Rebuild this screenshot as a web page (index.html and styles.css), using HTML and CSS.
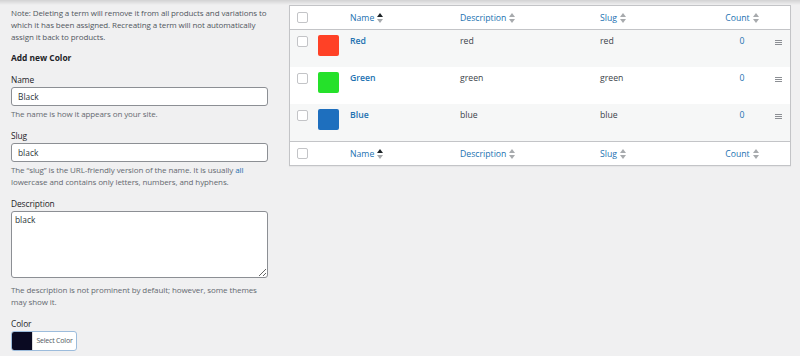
FILE: index.html
```html
<!DOCTYPE html>
<html>
    <head>
        <title>Color attributes</title>
        <link rel="stylesheet" href="styles.css">
    </head>
    <body>
        <div class="topShadow"></div>
        <div class="wrap">
            <div class="colLeft">
                <p class="note">Note: Deleting a term will remove it from all products and variations to which it has been assigned. Recreating a term will not automatically assign it back to products.</p>
                <h2 class="formTitle">Add new Color</h2>

                <div class="formField">
                    <label>Name</label>
                    <input type="text" value="Black">
                    <p class="help">The name is how it appears on your site.</p>
                </div>
                <div class="formField">
                    <label>Slug</label>
                    <input type="text" value="black">
                    <p class="help">The &ldquo;slug&rdquo; is the URL-friendly version of the name. It is usually <span class="blue">all</span> lowercase and contains only letters, numbers, and hyphens.</p>
                </div>
                <div class="formField">
                    <label>Description</label>
                    <textarea>black</textarea>
                    <p class="help">The description is not prominent by default; however, some themes may show it.</p>
                </div>
                <div class="formField">
                    <label>Color</label>
                    <div class="colorBtn"><span class="colorSwatch"></span><span class="colorText">Select Color</span></div>
                </div>
            </div>

            <div class="colRight">
                <div class="termTable">
                    <div class="row headRow">
                        <div class="cell"><span class="cb"></span></div>
                        <div class="cell"></div>
                        <div class="cell"><span class="sortLink">Name <svg class="sortIcon" width="6" height="10" viewBox="0 0 6 10"><path d="M3 0 L6 4 L0 4 Z" fill="#1d2327"/><path d="M0 6 L6 6 L3 10 Z" fill="#a7aaad"/></svg></span></div>
                        <div class="cell"><span class="sortLink">Description <svg class="sortIcon" width="6" height="10" viewBox="0 0 6 10"><path d="M3 0 L6 4 L0 4 Z" fill="#a7aaad"/><path d="M0 6 L6 6 L3 10 Z" fill="#a7aaad"/></svg></span></div>
                        <div class="cell"><span class="sortLink">Slug <svg class="sortIcon" width="6" height="10" viewBox="0 0 6 10"><path d="M3 0 L6 4 L0 4 Z" fill="#a7aaad"/><path d="M0 6 L6 6 L3 10 Z" fill="#a7aaad"/></svg></span></div>
                        <div class="cell countCell"><span class="sortLink">Count <svg class="sortIcon" width="6" height="10" viewBox="0 0 6 10"><path d="M3 0 L6 4 L0 4 Z" fill="#a7aaad"/><path d="M0 6 L6 6 L3 10 Z" fill="#a7aaad"/></svg></span></div>
                        <div class="cell"></div>
                    </div>

                    <div class="row termRow alt">
                        <div class="cell"><span class="cb"></span></div>
                        <div class="cell"><span class="swatch" style="background:#ff4126"></span></div>
                        <div class="cell"><a class="termName">Red</a></div>
                        <div class="cell">red</div>
                        <div class="cell">red</div>
                        <div class="cell countCell"><a class="count">0</a></div>
                        <div class="cell"><span class="handle"></span></div>
                    </div>
                    <div class="row termRow">
                        <div class="cell"><span class="cb"></span></div>
                        <div class="cell"><span class="swatch" style="background:#25e12a"></span></div>
                        <div class="cell"><a class="termName">Green</a></div>
                        <div class="cell">green</div>
                        <div class="cell">green</div>
                        <div class="cell countCell"><a class="count">0</a></div>
                        <div class="cell"><span class="handle"></span></div>
                    </div>
                    <div class="row termRow alt">
                        <div class="cell"><span class="cb"></span></div>
                        <div class="cell"><span class="swatch" style="background:#1e6fbe"></span></div>
                        <div class="cell"><a class="termName">Blue</a></div>
                        <div class="cell">blue</div>
                        <div class="cell">blue</div>
                        <div class="cell countCell"><a class="count">0</a></div>
                        <div class="cell"><span class="handle"></span></div>
                    </div>

                    <div class="row footRow">
                        <div class="cell"><span class="cb"></span></div>
                        <div class="cell"></div>
                        <div class="cell"><span class="sortLink">Name <svg class="sortIcon" width="6" height="10" viewBox="0 0 6 10"><path d="M3 0 L6 4 L0 4 Z" fill="#1d2327"/><path d="M0 6 L6 6 L3 10 Z" fill="#a7aaad"/></svg></span></div>
                        <div class="cell"><span class="sortLink">Description <svg class="sortIcon" width="6" height="10" viewBox="0 0 6 10"><path d="M3 0 L6 4 L0 4 Z" fill="#a7aaad"/><path d="M0 6 L6 6 L3 10 Z" fill="#a7aaad"/></svg></span></div>
                        <div class="cell"><span class="sortLink">Slug <svg class="sortIcon" width="6" height="10" viewBox="0 0 6 10"><path d="M3 0 L6 4 L0 4 Z" fill="#a7aaad"/><path d="M0 6 L6 6 L3 10 Z" fill="#a7aaad"/></svg></span></div>
                        <div class="cell countCell"><span class="sortLink">Count <svg class="sortIcon" width="6" height="10" viewBox="0 0 6 10"><path d="M3 0 L6 4 L0 4 Z" fill="#a7aaad"/><path d="M0 6 L6 6 L3 10 Z" fill="#a7aaad"/></svg></span></div>
                        <div class="cell"></div>
                    </div>
                </div>
            </div>
        </div>
    </body>
</html>
```

FILE: styles.css
```css
html,body{
    margin: 0;
    padding: 0;
    background-color: #f0f0f1;
    font-family: "Open Sans", "Noto Sans", sans-serif;
    font-size: 8.7px;
    line-height: 12px;
    color: #3c434a;
}
.topShadow{
    height: 5px;
    background: linear-gradient(#d2d2d3, #f0f0f1);
}
.wrap{
    display: flex;
    gap: 19px;
    padding: 0 9px 0 11px;
}

/* left form column */
.colLeft{
    width: 259px;
    flex: none;
    font-size: 8px;
    letter-spacing: -0.1px;
}
.note{
    margin: 2px 0 0 0;
    color: #50575e;
}
.formTitle{
    margin: 9px 0 0 0;
    font-size: 8.4px;
    line-height: 12px;
    font-weight: 700;
    letter-spacing: 0;
    color: #1d2327;
}
.formField{
    margin-top: 10px;
}
.formField label{
    display: block;
    font-size: 8.4px;
    letter-spacing: -0.1px;
    color: #1d2327;
    margin-bottom: 1px;
}
.formField input,.formField textarea{
    display: block;
    box-sizing: border-box;
    width: 257px;
    margin: 0;
    border: 1px solid #8c8f94;
    border-radius: 3px;
    background: white;
    font-family: inherit;
    font-size: 8.4px;
    color: #2c3338;
}
.formField input{
    height: 19px;
    padding: 0 6px;
}
.formField textarea{
    height: 67px;
    padding: 2px 3px;
    line-height: 12px;
    margin-bottom: 6px;
}
.help{
    margin: 2px 0 0 0;
    color: #646970;
}
.blue{
    color: #2271b1;
}
.colorBtn{
    display: flex;
    box-sizing: border-box;
    height: 20px;
    width: 66px;
    border: 1px solid #9cbcdc;
    border-radius: 3px;
    background: white;
    overflow: hidden;
}
.colorSwatch{
    width: 20px;
    flex: none;
    background: #0a0a22;
}
.colorText{
    flex: 1;
    font-size: 7px;
    letter-spacing: -0.2px;
    line-height: 18px;
    white-space: nowrap;
    text-align: center;
    color: #50575e;
    border-left: 1px solid #dcdcde;
}

/* terms table */
.colRight{
    flex: 1;
}
.termTable{
    background: white;
    border: 1px solid #c3c4c7;
    box-shadow: 0 1px 1px rgba(0,0,0,0.04);
}
.row{
    display: grid;
    grid-template-columns: 21px 33px 110px 140px 118px 60px 1fr;
}
.headRow{
    height: 23px;
    border-bottom: 1px solid #c3c4c7;
    align-items: center;
}
.footRow{
    height: 23px;
    border-top: 1px solid #c3c4c7;
    align-items: center;
}
.termRow{
    height: 37px;
}
.termRow.alt{
    background: #f6f7f7;
}
.cell{
    padding-left: 6px;
}
.termRow .cell{
    padding-top: 5px;
}
.row .cell:first-child{
    padding-left: 7px;
}
.termRow .cell:first-child{
    padding-top: 6px;
}
.cb{
    display: block;
    box-sizing: border-box;
    width: 11px;
    height: 11px;
    border: 1px solid #c3c4c7;
    border-radius: 2px;
    background: white;
}
.termRow .cell:nth-child(2){
    padding-left: 7px;
    padding-top: 5px;
}
.swatch{
    display: block;
    width: 21px;
    height: 21px;
    border-radius: 2px;
}
.sortLink{
    color: #2271b1;
    display: inline-flex;
    align-items: center;
    gap: 3px;
}
.termName{
    color: #2271b1;
    font-weight: 600;
}
.countCell{
    padding-left: 0;
    text-align: center;
}
.count{
    color: #2271b1;
}
.termRow .cell:last-child{
    padding-left: 3px;
}
.handle{
    display: block;
    width: 7px;
    height: 3px;
    margin: 5px 0 0 0;
    border-top: 1px solid #8c8f94;
    border-bottom: 1px solid #8c8f94;
}
.handle::after{
    content: "";
    display: block;
    margin-top: 1px;
    height: 1px;
    background: #8c8f94;
}
```
